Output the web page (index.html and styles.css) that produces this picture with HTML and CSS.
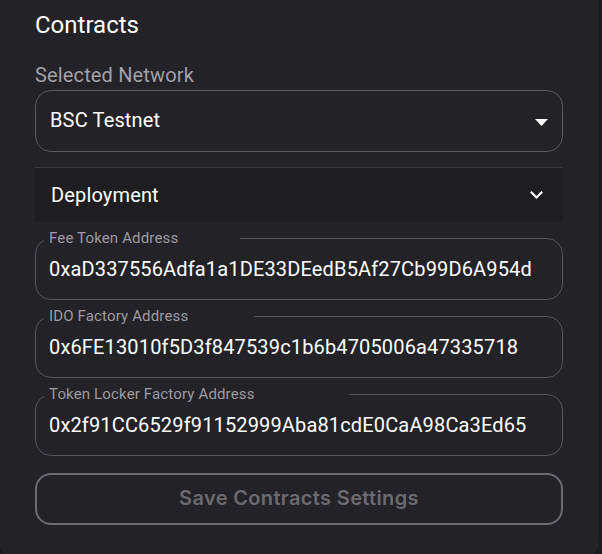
FILE: index.html
```html
<!DOCTYPE html>
<html>
<head>
<meta charset="utf-8">
<link rel="stylesheet" href="styles.css">
</head>
<body>
<div class="panel">
  <h2 class="title">Contracts</h2>
  <div class="net-label">Selected Network</div>
  <div class="select">
    <span>BSC Testnet</span>
    <svg class="drop" width="13" height="7" viewBox="0 0 13 7"><polygon points="0,0 13,0 6.5,7" fill="#fff"/></svg>
  </div>
  <div class="accordion">
    <div class="acc-header">
      <span>Deployment</span>
      <svg class="chev" width="13" height="8" viewBox="6 8.59 12 7.41"><path d="M16.59 8.59 12 13.17 7.41 8.59 6 10l6 6 6-6z" fill="#fff"/></svg>
    </div>
    <div class="acc-body">
      <div class="field">
        <label class="field-label">Fee Token Address</label>
        <div class="field-value">0xaD337556Adfa1a1DE33DEedB5Af27Cb99D6A954d</div>
        <fieldset class="outline"><legend><span>Fee Token Address</span></legend></fieldset>
      </div>
      <div class="field">
        <label class="field-label">IDO Factory Address</label>
        <div class="field-value">0x6FE13010f5D3f847539c1b6b4705006a47335718</div>
        <fieldset class="outline"><legend><span>IDO Factory Address</span></legend></fieldset>
      </div>
      <div class="field">
        <label class="field-label">Token Locker Factory Address</label>
        <div class="field-value">0x2f91CC6529f91152999Aba81cdE0CaA98Ca3Ed65</div>
        <fieldset class="outline"><legend><span>Token Locker Factory Address</span></legend></fieldset>
      </div>
    </div>
  </div>
  <button class="save" disabled>Save Contracts Settings</button>
</div>
</body>
</html>
```
FILE: styles.css
```css
html, body {
  margin: 0;
  padding: 0;
  overflow: hidden;
  background: #1b1b1e;
  height: 100%;
}
body {
  font-family: Roboto, "Liberation Sans", sans-serif;
  color: #fff;
  letter-spacing: 0.00938em;
}
.panel {
  box-sizing: border-box;
  width: 600px;
  height: 558px;
  margin-left: -1px;
  padding: 11px 36px 0 36px;
  background: #232227;
  border-radius: 0 0 16px 16px;
}
.title {
  margin: 0;
  font-size: 24px;
  line-height: 28px;
  font-weight: 400;
  letter-spacing: 0;
  color: #fff;
}
.net-label {
  margin-top: 24px;
  font-size: 20px;
  line-height: 24px;
  color: #a2a1a6;
}
.select {
  margin-top: 3px;
  box-sizing: border-box;
  height: 62px;
  border: 1px solid #5b5a5f;
  border-radius: 16px;
  padding: 0 14px 2px 14px;
  display: flex;
  align-items: center;
  justify-content: space-between;
  font-size: 20px;
  line-height: 24px;
}
.drop {
  margin-top: 4px;
}
.accordion {
  margin-top: 15px;
  border-top: 1px solid #3a393e;
}
.acc-header {
  box-sizing: border-box;
  height: 54px;
  background: #1e1e21;
  display: flex;
  align-items: center;
  justify-content: space-between;
  padding: 0 20px 0 16px;
  font-size: 20px;
  line-height: 24px;
}
.acc-body {
  display: flex;
  flex-direction: column;
  gap: 16px;
  padding-top: 16px;
}
.field {
  position: relative;
  box-sizing: border-box;
  height: 62px;
  padding: 0 14px;
  display: flex;
  align-items: center;
}
.field-value {
  font-size: 20px;
  line-height: 24px;
  color: #fff;
  white-space: nowrap;
}
.field-label {
  position: absolute;
  left: 14px;
  top: -7px;
  font-size: 15px;
  line-height: 15px;
  color: #9c9ba0;
}
.outline {
  position: absolute;
  top: -5px;
  left: 0;
  right: 0;
  bottom: 0;
  margin: 0;
  padding: 0 8px;
  border: 1px solid #58575c;
  border-radius: 16px;
  pointer-events: none;
}
.outline legend {
  padding: 0;
  height: 11px;
  font-size: 22px;
  line-height: 11px;
  letter-spacing: 0;
  visibility: hidden;
  white-space: nowrap;
}
.outline legend span {
  display: inline-block;
  padding: 0 5px;
}
.save {
  margin-top: 17px;
  width: 100%;
  box-sizing: border-box;
  height: 52px;
  border: 2px solid #6c6b70;
  border-radius: 16px;
  background: transparent;
  color: #6b6a6f;
  font-family: Inter, "Open Sans", sans-serif;
  font-weight: 600;
  font-size: 20px;
  letter-spacing: 0.35px;
  padding: 0 0 2px 0;
}
```
